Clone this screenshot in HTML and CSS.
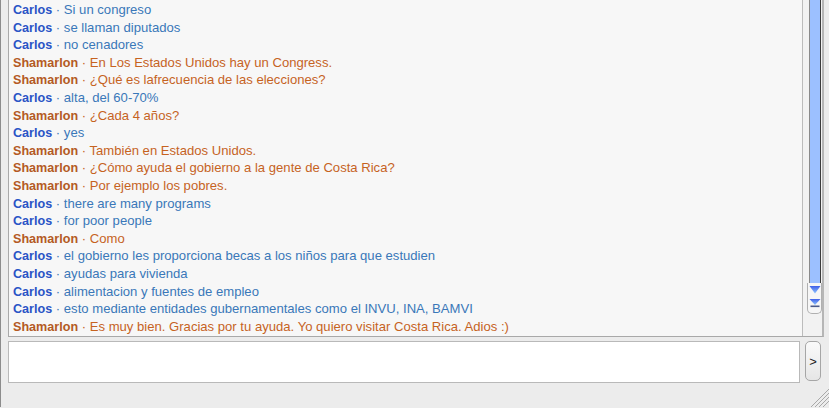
FILE: index.html
```html
<!DOCTYPE html>
<html>
<head>
<meta charset="utf-8">
<link rel="stylesheet" href="styles.css">
</head>
<body>
<div class="window">
  <div class="log">
    <div class="messages">
      <div class="row c"><b>Carlos</b> · Si un congreso</div>
      <div class="row c"><b>Carlos</b> · se llaman diputados</div>
      <div class="row c"><b>Carlos</b> · no cenadores</div>
      <div class="row s"><b>Shamarlon</b> · En Los Estados Unidos hay un Congress.</div>
      <div class="row s"><b>Shamarlon</b> · ¿Qué es lafrecuencia de las elecciones?</div>
      <div class="row c"><b>Carlos</b> · alta, del 60-70%</div>
      <div class="row s"><b>Shamarlon</b> · ¿Cada 4 años?</div>
      <div class="row c"><b>Carlos</b> · yes</div>
      <div class="row s"><b>Shamarlon</b> · También en Estados Unidos.</div>
      <div class="row s"><b>Shamarlon</b> · ¿Cómo ayuda el gobierno a la gente de Costa Rica?</div>
      <div class="row s"><b>Shamarlon</b> · Por ejemplo los pobres.</div>
      <div class="row c"><b>Carlos</b> · there are many programs</div>
      <div class="row c"><b>Carlos</b> · for poor people</div>
      <div class="row s"><b>Shamarlon</b> · Como</div>
      <div class="row c"><b>Carlos</b> · el gobierno les proporciona becas a los niños para que estudien</div>
      <div class="row c"><b>Carlos</b> · ayudas para vivienda</div>
      <div class="row c"><b>Carlos</b> · alimentacion y fuentes de empleo</div>
      <div class="row c"><b>Carlos</b> · esto mediante entidades gubernamentales como el INVU, INA, BAMVI</div>
      <div class="row s"><b>Shamarlon</b> · Es muy bien. Gracias por tu ayuda. Yo quiero visitar Costa Rica. Adios :)</div>
    </div>
    <div class="scrollbar">
      <div class="thumb"></div>
      <div class="arrows">
        <svg width="12" height="26" viewBox="0 0 12 26">
          <defs>
            <linearGradient id="g" x1="0" y1="0" x2="0" y2="1">
              <stop offset="0" stop-color="#3f5fe8"/>
              <stop offset="1" stop-color="#8fc4ff"/>
            </linearGradient>
          </defs>
          <polygon points="0.5,2 11.5,2 6,9.5" fill="url(#g)"/>
          <polygon points="0.5,15 11.5,15 6,21" fill="url(#g)"/>
          <rect x="1.5" y="21.5" width="9" height="1.6" fill="#4a5a8a"/>
        </svg>
      </div>
    </div>
  </div>
  <div class="compose">
    <div class="input"></div>
    <div class="send">&gt;</div>
  </div>
  <svg class="grip" width="22" height="20" viewBox="0 0 22 20">
    <line x1="22" y1="2" x2="4" y2="20" stroke="#a8a8a8" stroke-width="1"/>
    <line x1="22" y1="6" x2="8" y2="20" stroke="#a8a8a8" stroke-width="1"/>
    <line x1="22" y1="10" x2="12" y2="20" stroke="#a8a8a8" stroke-width="1"/>
    <line x1="22" y1="14" x2="16" y2="20" stroke="#a8a8a8" stroke-width="1"/>
  </svg>
</div>
</body>
</html>
```
FILE: styles.css
```css
html, body {
  margin: 0;
  padding: 0;
}
body {
  width: 829px;
  height: 408px;
  overflow: hidden;
  background: #ececec;
  font-family: "Liberation Sans", Arial, sans-serif;
}
.window {
  position: relative;
  width: 829px;
  height: 408px;
  box-sizing: border-box;
  border-left: 1px solid #8c8c8c;
  padding-left: 7px;
}
.log {
  display: flex;
  width: 816px;
  height: 338px;
  margin-top: -1px;
  box-sizing: border-box;
  border: 1px solid #a9a9a9;
  border-right: 2px solid #b6b6b6;
  background: #f7f7f7;
}
.messages {
  flex: 1;
  padding: 1px 0 0 4px;
  border-right: 1px solid #bcbcbc;
  font-size: 13.1px;
  line-height: 17.6px;
  white-space: nowrap;
  overflow: hidden;
}
.row {
  height: 17.6px;
}
.row b {
  font-weight: bold;
  font-size: 12.6px;
  line-height: 1;
}
.row.c {
  color: #3a78b9;
}
.row.c b {
  color: #2a54c6;
}
.row.s {
  color: #c6631f;
}
.row.s b {
  color: #b45a24;
}
.scrollbar {
  width: 19px;
  display: flex;
  flex-direction: column;
  align-items: flex-end;
  background: #f2f2f2;
}
.thumb {
  width: 12px;
  height: 283px;
  margin-right: 1px;
  box-sizing: border-box;
  background: #9cc0ff;
  border-left: 1px solid #8a8a8a;
  border-right: 1px solid #3c3c3c;
}
.arrows {
  width: 15px;
  height: 31px;
  box-sizing: border-box;
  border: 1px solid #b0b0b0;
  border-top: none;
  border-radius: 0 0 5px 5px;
  background: #f6f6f6;
  display: flex;
  justify-content: center;
  padding-top: 1px;
}
.compose {
  display: flex;
  align-items: flex-start;
  gap: 5px;
  margin-top: 4px;
}
.input {
  width: 792px;
  height: 42px;
  box-sizing: border-box;
  border: 1px solid #b9b9b9;
  background: #ffffff;
}
.send {
  width: 16px;
  height: 40px;
  box-sizing: border-box;
  border: 1px solid #a6a6a6;
  border-radius: 5px;
  background: linear-gradient(#fafafa, #e6e6e6);
  display: flex;
  align-items: center;
  justify-content: center;
  font-size: 13px;
  color: #222;
}
.grip {
  position: absolute;
  right: 0;
  bottom: 0;
}
```
